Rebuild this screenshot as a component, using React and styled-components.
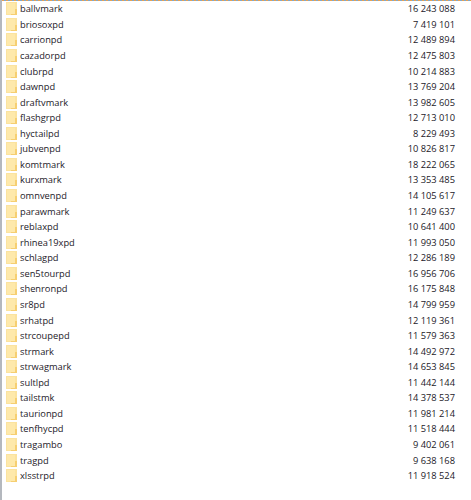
import React from 'react'
import styled, { createGlobalStyle } from 'styled-components'

const files = [
  ['ballvmark', '16 243 088'],
  ['briosoxpd', '7 419 101'],
  ['carrionpd', '12 489 894'],
  ['cazadorpd', '12 475 803'],
  ['clubrpd', '10 214 883'],
  ['dawnpd', '13 769 204'],
  ['draftvmark', '13 982 605'],
  ['flashgrpd', '12 713 010'],
  ['hyctailpd', '8 229 493'],
  ['jubvenpd', '10 826 817'],
  ['komtmark', '18 222 065'],
  ['kurxmark', '13 353 485'],
  ['omnvenpd', '14 105 617'],
  ['parawmark', '11 249 637'],
  ['reblaxpd', '10 641 400'],
  ['rhinea19xpd', '11 993 050'],
  ['schlagpd', '12 286 189'],
  ['sen5tourpd', '16 956 706'],
  ['shenronpd', '16 175 848'],
  ['sr8pd', '14 799 959'],
  ['srhatpd', '12 119 361'],
  ['strcoupepd', '11 579 363'],
  ['strmark', '14 492 972'],
  ['strwagmark', '14 653 845'],
  ['sultlpd', '11 442 144'],
  ['tailstmk', '14 378 537'],
  ['taurionpd', '11 981 214'],
  ['tenfhycpd', '11 518 444'],
  ['tragambo', '9 402 061'],
  ['tragpd', '9 638 168'],
  ['xlsstrpd', '11 918 524'],
]

const Global = createGlobalStyle`
  html, body { margin: 0; padding: 0; background: #fff; }
`

const Window = styled.div`
  width: 471px;
  height: 500px;
  overflow: hidden;
  box-sizing: border-box;
  background: #fff;
  border-left: 2px solid #b4b8be;
  font-family: "Open Sans", "Noto Sans", sans-serif;
  font-size: 9.3px;
  color: #1c2028;
`

const TopEdge = styled.div`
  height: 1px;
  background: repeating-linear-gradient(90deg, #e8a050 0 2px, #7fa8cc 2px 4px);
`

const List = styled.div`
  display: grid;
  grid-auto-rows: 15.57px;
  padding: 0 0 0 4px;
`

const Row = styled.div`
  display: grid;
  grid-template-columns: 12px 1fr auto;
  align-items: center;
  padding-right: 16px;
`

const Name = styled.span`
  padding-left: 2px;
`

const Size = styled.span`
  text-align: right;
`

const Folder = () => (
  <svg width="12" height="13" viewBox="0 0 12 13">
    <rect x="0" y="0" width="11" height="13" fill="#fbe39f" />
    <rect x="1" y="1" width="8" height="11" fill="#fee9ab" />
    <path d="M9 7h2v6H5v-1h4z" fill="#f6cf72" />
  </svg>
)

export default function App() {
  return (
    <Window>
      <Global />
      <TopEdge />
      <List>
        {files.map(([name, size]) => (
          <Row key={name}>
            <Folder />
            <Name>{name}</Name>
            <Size>{size}</Size>
          </Row>
        ))}
      </List>
    </Window>
  )
}
